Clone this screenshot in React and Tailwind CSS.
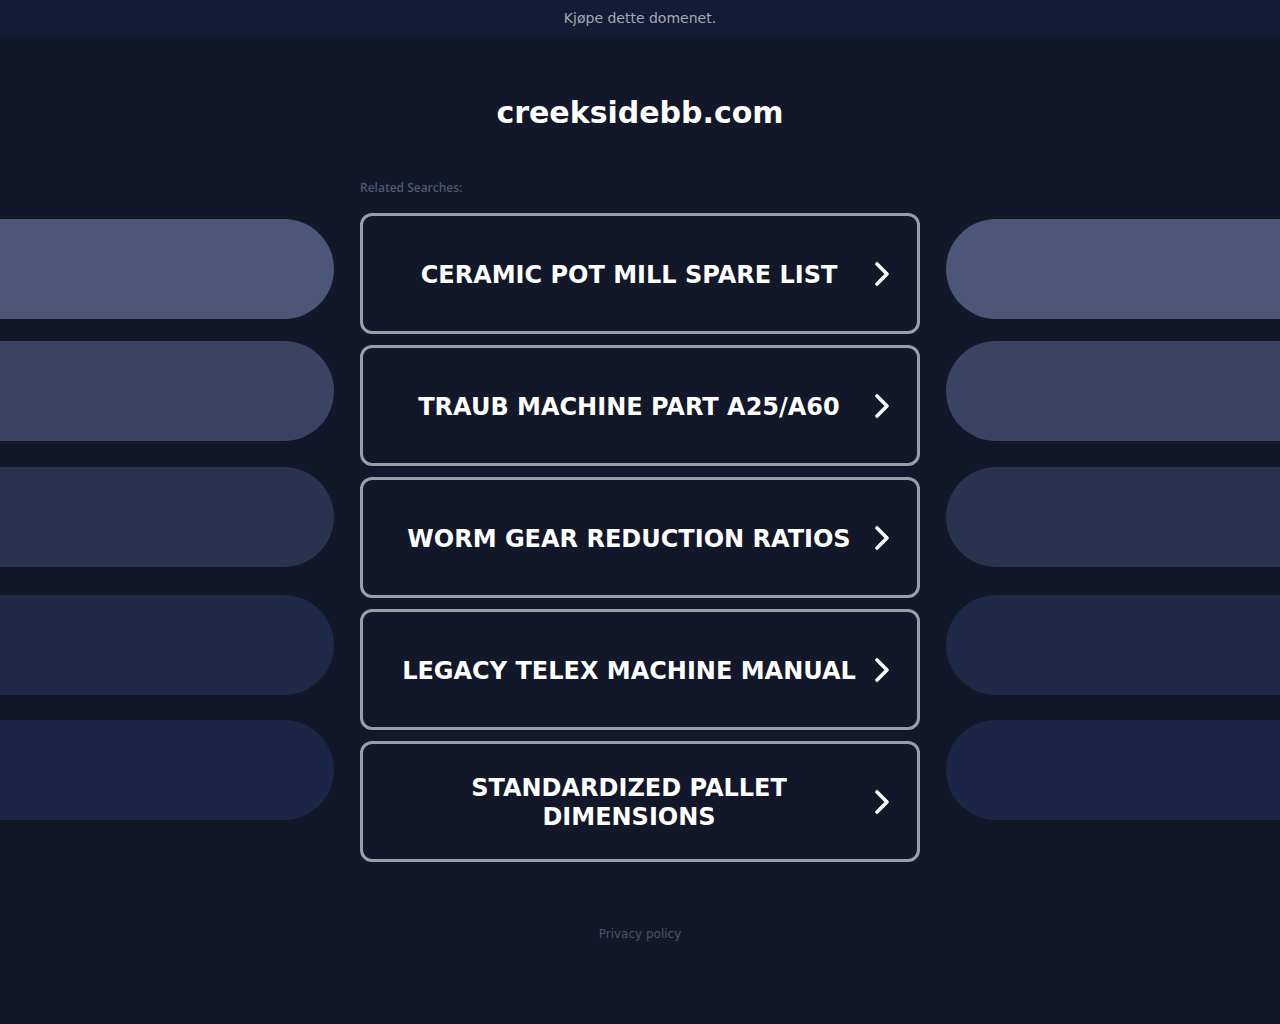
import React from "react";

const searches = [
  "Ceramic Pot Mill Spare List",
  "Traub Machine Part A25/A60",
  "Worm Gear Reduction Ratios",
  "Legacy Telex Machine Manual",
  "Standardized Pallet Dimensions",
];

// side pills fade from slate to deep navy, spacing is a bit uneven in the original
const pills = [
  { bg: "bg-[#4c5777]", mt: "mt-0" },
  { bg: "bg-[#3a4462]", mt: "mt-[22px]" },
  { bg: "bg-[#29334f]", mt: "mt-[26px]" },
  { bg: "bg-[#1e2948]", mt: "mt-[28px]" },
  { bg: "bg-[#1b2545]", mt: "mt-[25px]" },
];

const Chevron = () => (
  <svg width="20" height="26" viewBox="0 0 20 26" fill="none" className="shrink-0">
    <polyline
      points="6,3 16,13 6,23"
      stroke="white"
      strokeWidth="3.6"
      strokeLinecap="round"
      strokeLinejoin="round"
    />
  </svg>
);

const SearchButton = ({ label }) => (
  <a
    href="#"
    className="flex h-[121px] items-center rounded-[12px] border-[3px] border-[#9a9ea6] bg-[#121729] pl-6 pr-[26px]"
  >
    <span className="flex-1 pt-[3px] text-center text-[24px] font-bold uppercase leading-[29px] text-white">
      {label}
    </span>
    <Chevron />
  </a>
);

const SidePills = ({ side }) => (
  <div className="mt-[39px] flex w-[334px] flex-col">
    {pills.map((p) => (
      <div
        key={p.bg}
        className={`h-[100px] ${p.mt} ${p.bg} ${side === "left" ? "rounded-r-full" : "rounded-l-full"}`}
      />
    ))}
  </div>
);

export default function App() {
  return (
    <div className="min-h-[1024px] bg-[#121729] font-['DejaVu_Sans',sans-serif]">
      <div className="flex h-9 items-center justify-center bg-[#131c37] text-[14px] text-[#a3a8b4]">
        Kjøpe dette domenet.
      </div>

      <h1 className="mt-[59px] text-center text-[30px] font-bold leading-9 text-white">
        creeksidebb.com
      </h1>

      <div className="mt-[49px] flex gap-[26px]">
        <SidePills side="left" />

        <div className="w-[560px]">
          <p className="mb-[17px] font-['Open_Sans',sans-serif] text-[12px] font-semibold leading-4 text-[#4d576f]">
            Related Searches:
          </p>
          <div className="flex flex-col gap-[11px]">
            {searches.map((s) => (
              <SearchButton key={s} label={s} />
            ))}
          </div>
        </div>

        <SidePills side="right" />
      </div>

      <p className="mt-[63px] text-center text-[12px] text-[#4b5468]">
        Privacy policy
      </p>
    </div>
  );
}
